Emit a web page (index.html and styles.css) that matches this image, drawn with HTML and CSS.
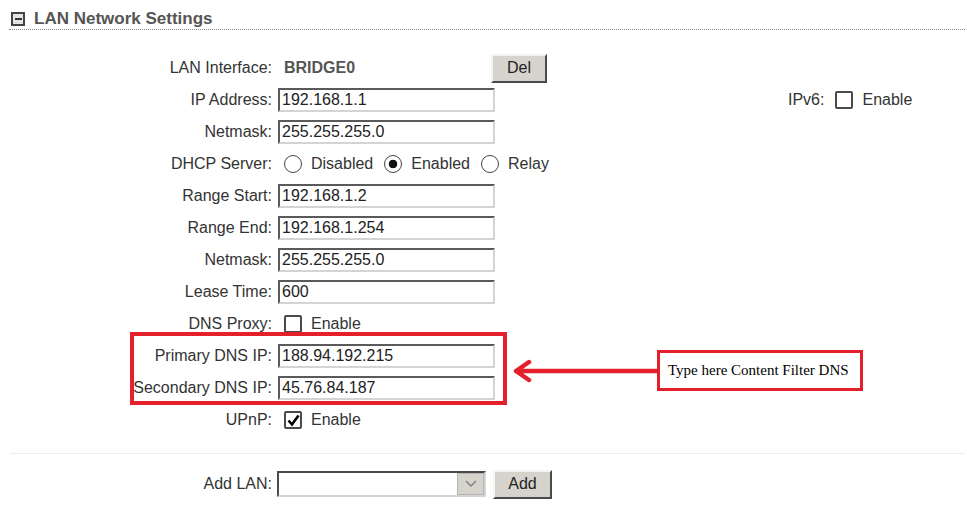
FILE: index.html
```html
<!DOCTYPE html>
<html>
<head>
<meta charset="utf-8">
<title>LAN Network Settings</title>
<link rel="stylesheet" href="styles.css">
</head>
<body>
<div class="panel">
  <div class="sec-head">
    <span class="toggle"><span class="minus"></span></span>
    <h2 class="sec-title">LAN Network Settings</h2>
  </div>

  <div class="form">
    <div class="row">
      <label class="lbl">LAN Interface:</label>
      <div class="ctl">
        <b class="iface">BRIDGE0</b>
        <button class="btn btn-del">Del</button>
      </div>
    </div>
    <div class="row">
      <label class="lbl">IP Address:</label>
      <div class="ctl">
        <input class="txt" type="text" value="192.168.1.1">
        <span class="ipv6-lbl">IPv6:</span>
        <span class="cb"></span>
        <span class="opt">Enable</span>
      </div>
    </div>
    <div class="row">
      <label class="lbl">Netmask:</label>
      <div class="ctl"><input class="txt" type="text" value="255.255.255.0"></div>
    </div>
    <div class="row">
      <label class="lbl">DHCP Server:</label>
      <div class="ctl">
        <span class="rd first"></span><span class="opt">Disabled</span>
        <span class="rd on"></span><span class="opt">Enabled</span>
        <span class="rd"></span><span class="opt">Relay</span>
      </div>
    </div>
    <div class="row">
      <label class="lbl">Range Start:</label>
      <div class="ctl"><input class="txt" type="text" value="192.168.1.2"></div>
    </div>
    <div class="row">
      <label class="lbl">Range End:</label>
      <div class="ctl"><input class="txt" type="text" value="192.168.1.254"></div>
    </div>
    <div class="row">
      <label class="lbl">Netmask:</label>
      <div class="ctl"><input class="txt" type="text" value="255.255.255.0"></div>
    </div>
    <div class="row">
      <label class="lbl">Lease Time:</label>
      <div class="ctl"><input class="txt" type="text" value="600"></div>
    </div>
    <div class="row">
      <label class="lbl">DNS Proxy:</label>
      <div class="ctl"><span class="cb first"></span><span class="opt">Enable</span></div>
    </div>
    <div class="row">
      <label class="lbl">Primary DNS IP:</label>
      <div class="ctl"><input class="txt" type="text" value="188.94.192.215"></div>
    </div>
    <div class="row">
      <label class="lbl">Secondary DNS IP:</label>
      <div class="ctl"><input class="txt" type="text" value="45.76.84.187"></div>
    </div>
    <div class="row">
      <label class="lbl">UPnP:</label>
      <div class="ctl">
        <span class="cb first"><svg viewBox="0 0 13 13" width="13" height="13"><path d="M1.5 6.5 L5 10.5 L11.5 1.5" fill="none" stroke="#000" stroke-width="2.6" stroke-linejoin="miter"/></svg></span>
        <span class="opt">Enable</span>
      </div>
    </div>

    <div class="dns-box"></div>
    <svg class="arrow" viewBox="0 0 148 26" width="148" height="26">
      <path d="M4 13 H147 M17 4 L4 13 L17 22" fill="none" stroke="#e3202c" stroke-width="4.5" stroke-linecap="round" stroke-linejoin="round"/>
    </svg>
    <div class="callout">Type here Content Filter DNS</div>
  </div>

  <div class="sep"></div>

  <div class="row add-row">
    <label class="lbl">Add LAN:</label>
    <div class="ctl ctl-add">
      <div class="select">
        <span class="sel-arrow"><svg viewBox="0 0 12 8" width="12" height="8"><path d="M1 1 L6 6 L11 1" fill="none" stroke="#808080" stroke-width="1.4"/></svg></span>
      </div>
      <button class="btn btn-add">Add</button>
    </div>
  </div>
</div>
</body>
</html>
```

FILE: styles.css
```css
html, body {
  margin: 0;
  padding: 0;
  background: #ffffff;
}
body {
  font-family: "Liberation Sans", Arial, sans-serif;
  font-size: 16px;
  color: #333333;
}
.panel {
  width: 967px;
}
.sec-head {
  display: flex;
  align-items: center;
  height: 21px;
  padding-top: 8px;
  margin: 0 2px 0 9px;
  border-bottom: 1px dotted #8a8a8a;
}
.toggle {
  width: 14px;
  height: 14px;
  box-sizing: border-box;
  border: 2px solid #444;
  background: #e4e4e4;
  margin-left: 2px;
  display: flex;
  align-items: center;
  justify-content: center;
}
.minus {
  width: 7px;
  height: 2px;
  background: #333;
}
.sec-title {
  margin: 0 0 0 9px;
  font-size: 17px;
  font-weight: bold;
  color: #555555;
  line-height: 20px;
}
.form {
  position: relative;
  margin-top: 22px;
}
.row {
  display: flex;
  align-items: center;
  height: 32px;
}
.lbl {
  width: 272px;
  flex-shrink: 0;
  text-align: right;
  color: #333;
}
.ctl {
  margin-left: 6px;
  display: flex;
  align-items: center;
}
.iface {
  width: 207px;
  padding-left: 6px;
  color: #555555;
  font-weight: bold;
}
.btn {
  font-family: "Liberation Sans", Arial, sans-serif;
  font-size: 16px;
  color: #222;
  background: #d6d3cc;
  border: 2px solid;
  border-color: #f4f4f4 #4a4a4a #4a4a4a #f4f4f4;
  padding: 0;
  box-sizing: border-box;
}
.btn-del {
  width: 56px;
  height: 29px;
}
.txt {
  width: 217px;
  height: 24px;
  box-sizing: border-box;
  border: 2px solid;
  border-color: #5a5a5a #d4d4d4 #d4d4d4 #5a5a5a;
  padding: 0 2px;
  margin: 0;
  font-family: "Liberation Sans", Arial, sans-serif;
  font-size: 16px;
  color: #222;
  background: #fff;
  outline: none;
}
.ipv6-lbl {
  margin-left: 293px;
  color: #333;
}
.cb {
  width: 18px;
  height: 18px;
  box-sizing: border-box;
  border: 2px solid #4a4a4a;
  border-radius: 2px;
  background: #fff;
  margin-left: 11px;
  margin-right: 9px;
  display: flex;
  align-items: center;
  justify-content: center;
}
.cb.first {
  margin-left: 6px;
}
.rd {
  width: 18px;
  height: 18px;
  box-sizing: border-box;
  border: 1.5px solid #444;
  border-radius: 50%;
  background: #fff;
  margin-left: 11px;
  margin-right: 9px;
}
.rd.first {
  margin-left: 6px;
}
.rd.on {
  background: radial-gradient(circle, #111 0 4px, #fff 4.6px);
}
.opt {
  color: #333;
}
.dns-box {
  position: absolute;
  left: 130px;
  top: 280px;
  width: 377px;
  height: 73px;
  box-sizing: border-box;
  border: 4px solid #e3202c;
}
.arrow {
  position: absolute;
  left: 512px;
  top: 306px;
}
.callout {
  position: absolute;
  left: 657px;
  top: 298px;
  width: 206px;
  height: 41px;
  box-sizing: border-box;
  border: 3px solid #e3202c;
  padding-left: 8px;
  display: flex;
  align-items: center;
  font-family: "Liberation Serif", "Times New Roman", serif;
  font-size: 15px;
  color: #000;
  background: #fff;
}
.sep {
  margin: 17px 2px 0 10px;
  border-top: 1px solid #ececec;
}
.add-row {
  margin-top: 14px;
}
.ctl-add {
  margin-left: 5px;
}
.select {
  width: 209px;
  height: 26px;
  box-sizing: border-box;
  border: 2px solid;
  border-color: #4a4a4a #d4d4d4 #d4d4d4 #4a4a4a;
  background: #fff;
  display: flex;
  justify-content: flex-end;
  align-items: center;
}
.sel-arrow {
  width: 27px;
  height: 22px;
  box-sizing: border-box;
  border: 1px solid #b4b4b4;
  background: #d6d3cc;
  display: flex;
  align-items: center;
  justify-content: center;
}
.btn-add {
  width: 59px;
  height: 29px;
  margin-left: 7px;
}
```
